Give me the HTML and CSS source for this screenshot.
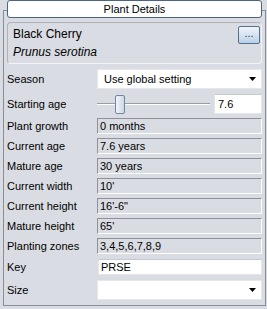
FILE: index.html
```html
<!DOCTYPE html>
<html lang="en">
<head>
<meta charset="UTF-8">
<title>Plant Details</title>
<link rel="stylesheet" href="styles.css">
</head>
<body>
  <!-- Panel group box -->
  <div class="panel">
    <div class="titulo">Plant Details</div>

    <!-- Name box -->
    <div class="nombre">
      <div class="nombre-textos">
        <div>Black Cherry</div>
        <div class="latin">Prunus serotina</div>
      </div>
      <div class="boton">...</div>
    </div>

    <div class="fila fila-alta mt5">
      <div class="etiqueta">Season</div>
      <div class="combo">
        <span>Use global setting</span>
        <svg width="7" height="4" viewBox="0 0 7 4"><path d="M0 0H7L3.5 4Z" fill="#000"/></svg>
      </div>
    </div>

    <div class="fila fila-alta mt5">
      <div class="etiqueta">Starting age</div>
      <div class="slider"><div class="thumb"></div></div>
      <div class="entrada edad">7.6</div>
    </div>

    <div class="fila">
      <div class="etiqueta">Plant growth</div>
      <div class="campo">0 months</div>
    </div>
    <div class="fila">
      <div class="etiqueta">Current age</div>
      <div class="campo">7.6 years</div>
    </div>
    <div class="fila">
      <div class="etiqueta">Mature age</div>
      <div class="campo">30 years</div>
    </div>
    <div class="fila">
      <div class="etiqueta">Current width</div>
      <div class="campo">10'</div>
    </div>
    <div class="fila">
      <div class="etiqueta">Current height</div>
      <div class="campo">16'-6"</div>
    </div>
    <div class="fila">
      <div class="etiqueta">Mature height</div>
      <div class="campo">65'</div>
    </div>
    <div class="fila">
      <div class="etiqueta">Planting zones</div>
      <div class="campo">3,4,5,6,7,8,9</div>
    </div>

    <div class="fila mt5">
      <div class="etiqueta">Key</div>
      <div class="entrada clave">PRSE</div>
    </div>

    <div class="fila fila-alta mt5">
      <div class="etiqueta">Size</div>
      <div class="combo">
        <span></span>
        <svg width="7" height="4" viewBox="0 0 7 4"><path d="M0 0H7L3.5 4Z" fill="#000"/></svg>
      </div>
    </div>
  </div>
</body>
</html>
```

FILE: styles.css
```css
/* Base */
body {
  margin: 0;
  width: 267px;
  height: 309px;
  background: #d9dce2;
  font-family: "Liberation Sans", Arial, sans-serif;
  font-size: 11px;
  color: #000;
  overflow: hidden;
}
.panel {
  box-sizing: border-box;
  margin: 10px 0 0 3px;
  width: 263px;
  height: 296px;
  border: 1px solid #8a8d92;
  padding: 0 3px 0 3px;
  display: flex;
  flex-direction: column;
  gap: 4px;
}
/* Header tab over the top border */
.titulo {
  box-sizing: border-box;
  margin-top: -11px;
  height: 18px;
  background: #fff;
  border: 1px solid #4b6580;
  border-radius: 3px;
  text-align: center;
  line-height: 16px;
}
.nombre {
  box-sizing: border-box;
  height: 42px;
  display: flex;
  justify-content: space-between;
  align-items: flex-start;
  border: 1px solid #f3f4f6;
  border-top-color: #aeb2b8;
  border-left-color: #aeb2b8;
  border-radius: 4px;
  padding: 2px 1px 0 5px;
  font-size: 12px;
  line-height: 18px;
}
.latin {
  font-style: italic;
}
.boton {
  box-sizing: border-box;
  width: 22px;
  height: 18px;
  margin-top: 1px;
  border: 1px solid #56708c;
  border-radius: 2px;
  background: linear-gradient(#eef3f9, #d6e3f1 50%, #b9cfe7);
  color: #1e3a5f;
  font-size: 11px;
  line-height: 13px;
  text-align: center;
}
/* Rows */
.fila {
  display: flex;
  align-items: center;
  height: 16px;
}
.fila-alta {
  height: 20px;
}
.mt5 {
  margin-top: 1px;
}
.etiqueta {
  width: 90px;
  flex: none;
  white-space: nowrap;
}
.campo {
  box-sizing: border-box;
  flex: 1;
  height: 16px;
  border: 1px solid #fff;
  border-top-color: #8e9196;
  border-left-color: #8e9196;
  padding-left: 2px;
  line-height: 14px;
}
.combo {
  box-sizing: border-box;
  flex: 1;
  height: 20px;
  background: #fff;
  border: 1px solid #e6e7ea;
  display: flex;
  align-items: center;
  justify-content: space-between;
  padding: 0 5px 0 6px;
  font-size: 11px;
}
.entrada {
  box-sizing: border-box;
  background: #fff;
  border: 1px solid #e4e5e8;
  border-top-color: #c6c8cc;
}
.edad {
  width: 48px;
  height: 20px;
  margin-left: 4px;
  padding-left: 3px;
  line-height: 18px;
}
.clave {
  flex: 1;
  height: 16px;
  margin-left: 1px;
  padding-left: 2px;
  line-height: 14px;
}
/* Slider */
.slider {
  flex: 1;
  height: 19px;
  display: flex;
  align-items: center;
  background: linear-gradient(transparent 8px, #9a9da2 8px, #9a9da2 9px, #fff 9px, #fff 10px, transparent 10px);
}
.thumb {
  box-sizing: border-box;
  width: 10px;
  height: 19px;
  margin-left: 18px;
  border: 1px solid #6f86a0;
  border-radius: 2px;
  background: linear-gradient(90deg, #f2f5f9, #cdd9e7);
}
```
